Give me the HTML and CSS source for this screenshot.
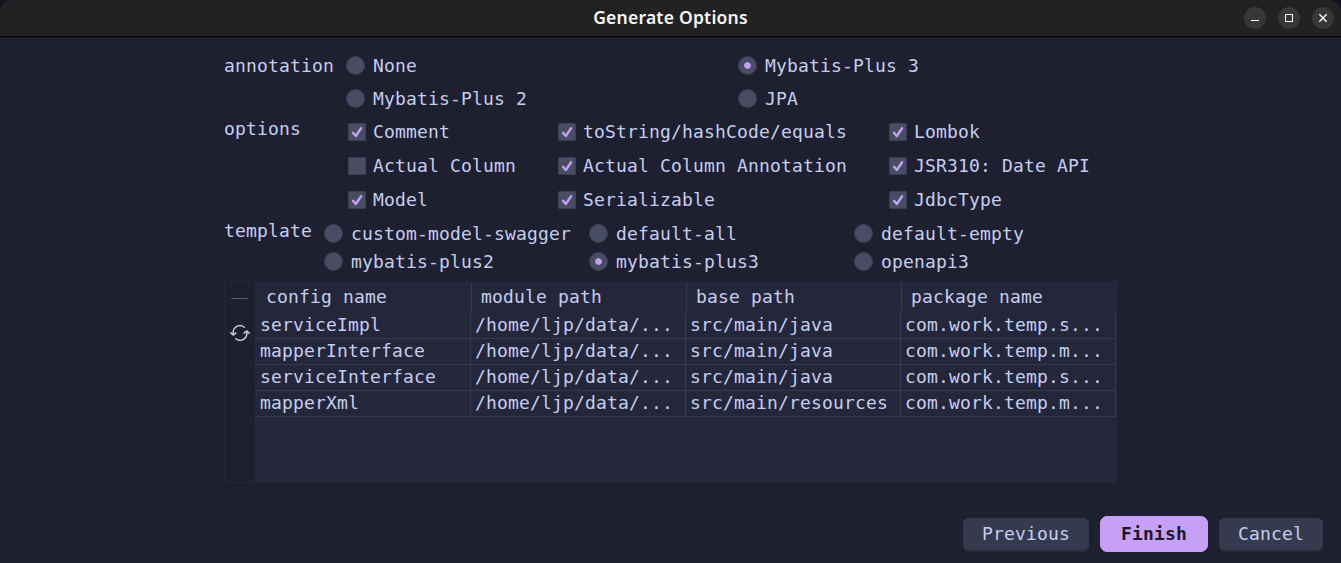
FILE: index.html
```html
<!DOCTYPE html>
<html lang="en">
<head>
<meta charset="utf-8">
<title>Generate Options</title>
<link rel="stylesheet" href="styles.css">
</head>
<body>
<svg class="defs" width="0" height="0"><symbol id="check" viewBox="0 0 18 18"><path d="M5 9.8 7.8 13 13.1 5.3" fill="none" stroke="#c6a0f6" stroke-width="2.4" stroke-linecap="round" stroke-linejoin="round"/></symbol></svg>
<div class="window">
<header class="titlebar">
  <h1 class="title">Generate Options</h1>
  <div class="controls">
    <svg width="22" height="22" viewBox="0 0 22 22"><circle cx="11" cy="11" r="11" fill="#373737"/><path d="M7 13.5h8" stroke="#fff" stroke-width="1"/></svg>
    <svg width="22" height="22" viewBox="0 0 22 22"><circle cx="11" cy="11" r="11" fill="#373737"/><rect x="7.5" y="7.5" width="7" height="7" fill="none" stroke="#fff"/></svg>
    <svg width="22" height="22" viewBox="0 0 22 22"><circle cx="11" cy="11" r="11" fill="#373737"/><path d="M7.3 7.3l7.4 7.4M14.7 7.3l-7.4 7.4" stroke="#fff" stroke-width="1.4"/></svg>
  </div>
</header>
<main class="content">
  <section class="group annotation">
    <span class="label">annotation</span>
    <div class="choices">
      <label class="item"><i class="radio"></i>None</label>
      <label class="item"><i class="radio on"></i>Mybatis-Plus 3</label>
      <label class="item"><i class="radio"></i>Mybatis-Plus 2</label>
      <label class="item"><i class="radio"></i>JPA</label>
    </div>
  </section>
  <section class="group options">
    <span class="label">options</span>
    <div class="choices">
      <label class="item"><i class="box"><svg><use href="#check"/></svg></i>Comment</label>
      <label class="item"><i class="box"><svg><use href="#check"/></svg></i>toString/hashCode/equals</label>
      <label class="item"><i class="box"><svg><use href="#check"/></svg></i>Lombok</label>
      <label class="item"><i class="box"></i>Actual Column</label>
      <label class="item"><i class="box"><svg><use href="#check"/></svg></i>Actual Column Annotation</label>
      <label class="item"><i class="box"><svg><use href="#check"/></svg></i>JSR310: Date API</label>
      <label class="item"><i class="box"><svg><use href="#check"/></svg></i>Model</label>
      <label class="item"><i class="box"><svg><use href="#check"/></svg></i>Serializable</label>
      <label class="item"><i class="box"><svg><use href="#check"/></svg></i>JdbcType</label>
    </div>
  </section>
  <section class="group template">
    <span class="label">template</span>
    <div class="choices">
      <label class="item"><i class="radio"></i>custom-model-swagger</label>
      <label class="item"><i class="radio"></i>default-all</label>
      <label class="item"><i class="radio"></i>default-empty</label>
      <label class="item"><i class="radio"></i>mybatis-plus2</label>
      <label class="item"><i class="radio on"></i>mybatis-plus3</label>
      <label class="item"><i class="radio"></i>openapi3</label>
    </div>
  </section>
  <section class="panel">
    <div class="tools">
      <svg width="20" height="20" viewBox="0 0 20 20"><path d="M1.2 7.5h16.3" stroke="#5c5f66" stroke-width="1.1"/></svg>
      <svg width="20" height="16" viewBox="0 0 20 16" fill="none" stroke="#ced0d6" stroke-width="1.4" stroke-linecap="round" stroke-linejoin="round"><path d="M3.1 10V8A6.9 7.2 0 0 1 14.2 2.2M.7 7.7 3.1 10.1 6 7.9M16.9 6V8A6.9 7.2 0 0 1 5.8 13.8M14 8.1 16.9 5.9 19.3 8.3"/></svg>
    </div>
    <div class="table">
      <div class="row head"><span>config name</span><span>module path</span><span>base path</span><span>package name</span></div>
      <div class="row"><span>serviceImpl</span><span>/home/ljp/data/...</span><span>src/main/java</span><span>com.work.temp.s...</span></div>
      <div class="row"><span>mapperInterface</span><span>/home/ljp/data/...</span><span>src/main/java</span><span>com.work.temp.m...</span></div>
      <div class="row"><span>serviceInterface</span><span>/home/ljp/data/...</span><span>src/main/java</span><span>com.work.temp.s...</span></div>
      <div class="row"><span>mapperXml</span><span>/home/ljp/data/...</span><span>src/main/resources</span><span>com.work.temp.m...</span></div>
    </div>
  </section>
</main>
<footer class="actions">
  <button class="btn">Previous</button>
  <button class="btn primary">Finish</button>
  <button class="btn">Cancel</button>
</footer>
</div>
</body>
</html>
```
FILE: styles.css
```css
* { box-sizing: border-box; }
body {
  margin: 0;
  background: #11121b;
  color: #c5cef0;
  font: 18px/22px "DejaVu Sans Mono", monospace;
  letter-spacing: 0.163px;
}
.defs { display: block; }
.window {
  display: flex;
  flex-direction: column;
  height: 563px;
  background: #1e2030;
  border-radius: 12px 12px 0 0;
  overflow: hidden;
}
.titlebar {
  display: grid;
  grid-template-columns: 1fr auto 1fr;
  align-items: center;
  height: 37px;
  padding: 0 7px;
  background: #222;
  border-bottom: 1px solid #000;
}
.title {
  grid-column: 2;
  margin: 0;
  padding-bottom: 2px;
  color: #f7f7f7;
  font: 600 17.5px/24px "Noto Sans", sans-serif;
  letter-spacing: 0.22px;
}
.controls { display: flex; justify-content: flex-end; gap: 12px; }
.controls svg { display: block; }

.content { width: 893px; margin-left: 224px; padding-top: 18px; }
.group { display: flex; align-items: flex-start; white-space: pre; }
.choices { display: grid; }
.item { display: flex; align-items: flex-start; }
.annotation { gap: 12px; }
.annotation .choices { grid-template-columns: 392px 1fr; grid-auto-rows: 33px; }
.options { gap: 46px; }
.options .label { margin-top: -3px; }
.options .choices { grid-template-columns: 210px 331px 1fr; grid-auto-rows: 34px; }
.template { gap: 12px; }
.template .label { margin-top: -3px; }
.template .choices { grid-template-columns: 265px 265px 1fr; grid-auto-rows: 28px; }

.radio {
  flex: none;
  width: 19px;
  height: 19px;
  margin: 1px 7.6px 0 0.4px;
  border: 1px solid #3c4056;
  border-radius: 50%;
  background: #494d64;
}
.radio.on { background: radial-gradient(circle, #c6a0f6 2.9px, #494d64 3.7px); }
.box {
  flex: none;
  width: 18px;
  height: 18px;
  margin: 2px 7.4px 0 0.6px;
  border-radius: 2.5px;
  background: #494d64;
  box-shadow: inset 0 0 0 1px #3c4056;
}
.box svg { display: block; width: 18px; height: 18px; }

.panel {
  display: flex;
  height: 202px;
  margin-top: 2px;
  border: 1px solid #24273a;
}
.tools {
  display: flex;
  flex-direction: column;
  align-items: center;
  gap: 14px;
  width: 30px;
  padding-top: 9px;
}
.table { flex: 1; background: #24273a; padding-top: 1px; }
.row {
  display: grid;
  grid-template-columns: 216px 215px 215px 215px;
  width: 861px;
  height: 26px;
  border-bottom: 1px solid #363a4f;
}
.row span {
  padding: 1px 0 0 4px;
  border-right: 1px solid #363a4f;
  white-space: pre;
}
.row.head {
  grid-template-columns: 217px 215px 215px 214px;
  height: 30px;
  padding-bottom: 2px;
  border-bottom: 0;
}
.row.head span { padding: 3px 0 0 9px; }
.row.head span:first-child { padding-left: 11px; }
.row.head span:last-child { border-right: 0; }
.row:not(.head) span:first-child { padding-left: 5px; }

.actions {
  display: flex;
  align-items: center;
  justify-content: flex-end;
  gap: 11px;
  margin-top: auto;
  padding: 0 18px 11px 0;
}
.btn {
  height: 32px;
  padding: 0 18px;
  border: 1px solid #34384c;
  border-radius: 5px;
  background: #363a4f;
  box-shadow: 0 2px 0 #292b35;
  color: inherit;
  font: inherit;
  letter-spacing: inherit;
  line-height: 28px;
}
.btn.primary {
  height: 36px;
  padding: 0 20px;
  border-color: #c6a0f6;
  border-radius: 7px;
  background: #c6a0f6;
  box-shadow: none;
  color: #181926;
  font-weight: bold;
}
```
